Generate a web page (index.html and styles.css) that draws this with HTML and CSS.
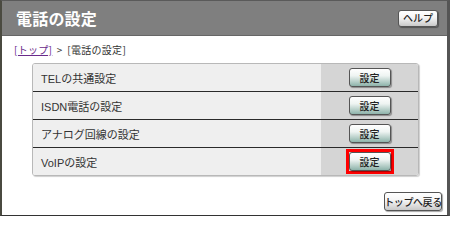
FILE: index.html
```html
<!DOCTYPE html>
<html lang="ja">
<head>
<meta charset="utf-8">
<title>電話の設定</title>
<link rel="stylesheet" href="styles.css">
</head>
<body>
<div class="page">
  <div class="header">
    <h1 class="title">電話の設定</h1>
    <button class="btn btn-gray btn-help">ヘルプ</button>
  </div>
  <div class="crumbs"><a class="crumb-link" href="#">[トップ]</a> &gt; [電話の設定]</div>
  <div class="table">
    <div class="row">
      <div class="label">TELの共通設定</div>
      <div class="action"><button class="btn btn-teal">設定</button></div>
    </div>
    <div class="row">
      <div class="label">ISDN電話の設定</div>
      <div class="action"><button class="btn btn-teal">設定</button></div>
    </div>
    <div class="row">
      <div class="label">アナログ回線の設定</div>
      <div class="action"><button class="btn btn-teal">設定</button></div>
    </div>
    <div class="row">
      <div class="label">VoIPの設定</div>
      <div class="action"><span class="hl"><button class="btn btn-teal">設定</button></span></div>
    </div>
  </div>
  <div class="footer">
    <button class="btn btn-gray btn-back">トップへ戻る</button>
  </div>
</div>
</body>
</html>
```
FILE: styles.css
```css
html, body {
  margin: 0;
  padding: 0;
  background: #ffffff;
}
body {
  font-family: "Liberation Sans", "Noto Sans CJK JP", sans-serif;
  color: #222;
}
.page {
  width: 450px;
  height: 216px;
  box-sizing: border-box;
  border-top: 1px solid #5a5a5a;
  border-left: 2px solid #4a4a40;
  border-right: 3px solid #555555;
  border-bottom: 1px solid #333333;
  background: #ffffff;
  display: flex;
  flex-direction: column;
}
.header {
  height: 35px;
  box-sizing: border-box;
  background: #7f7f7f;
  border-bottom: 1px solid #666;
  display: flex;
  align-items: center;
  justify-content: space-between;
  padding: 0 9px 0 14px;
}
.title {
  margin: 0;
  font-size: 16px;
  font-weight: bold;
  color: #ffffff;
  letter-spacing: 0.2px;
  font-family: "Noto Sans CJK JP", sans-serif;
}
.btn {
  font-family: "Noto Sans CJK JP", sans-serif;
  font-size: 10px;
  font-weight: 500;
  color: #222;
  border: 1px solid #555;
  border-radius: 3px;
  padding: 0;
  line-height: 1;
  white-space: nowrap;
  display: inline-flex;
  align-items: center;
  justify-content: center;
  box-shadow: 1px 1px 1px rgba(0,0,0,0.35);
  box-sizing: border-box;
}
.btn-gray {
  background: linear-gradient(#ffffff 0%, #f4f4f4 45%, #c9c9c9 100%);
}
.btn-teal {
  width: 42px;
  height: 19px;
  background: linear-gradient(#ffffff 0%, #eef4f2 40%, #8db3aa 100%);
}
.btn-help {
  width: 40px;
  height: 17px;
}
.crumbs {
  font-size: 10px;
  line-height: 12px;
  margin: 8px 0 0 12px;
  font-family: "Noto Sans CJK JP", sans-serif;
  color: #333;
  letter-spacing: 0.3px;
  word-spacing: 2px;
}
.crumb-link {
  color: #6a2a8a;
  text-decoration: underline;
}
.table {
  margin: 7px 0 0 30px;
  width: 387px;
  box-sizing: border-box;
  border: 1px solid #b8b8b8;
  border-radius: 3px;
  box-shadow: 1px 1px 1px #cfcfcf;
  overflow: hidden;
  display: flex;
  flex-direction: column;
}
.row {
  display: flex;
  height: 27px;
}
.row + .row {
  border-top: 1px solid #2a2a2a;
}
.label {
  flex: 1;
  background: #efefef;
  display: flex;
  align-items: center;
  padding-left: 8px;
  font-size: 11px;
  color: #333;
  font-family: "Liberation Sans", "Noto Sans CJK JP", sans-serif;
}
.action {
  width: 97px;
  background: #d5d5d5;
  display: flex;
  align-items: center;
  justify-content: center;
}
.hl {
  display: inline-flex;
  border: 3px solid #ff0000;
}
.footer {
  display: flex;
  justify-content: flex-end;
  margin-top: auto;
  padding: 0 5px 4px 0;
}
.btn-back {
  width: 58px;
  height: 19px;
  letter-spacing: -0.4px;
}
```
